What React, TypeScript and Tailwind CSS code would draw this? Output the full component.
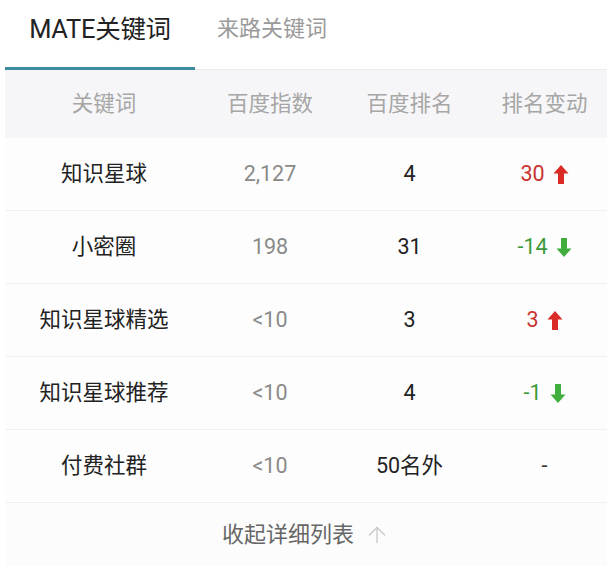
import { ArrowUp } from 'lucide-react';

const rows = [
  { name: '知识星球', index: '2,127', rank: '4', change: '30', dir: 'up' },
  { name: '小密圈', index: '198', rank: '31', change: '-14', dir: 'down' },
  { name: '知识星球精选', index: '<10', rank: '3', change: '3', dir: 'up' },
  { name: '知识星球推荐', index: '<10', rank: '4', change: '-1', dir: 'down' },
  { name: '付费社群', index: '<10', rank: '50名外', change: '-', dir: null },
];

const cols = 'grid grid-cols-[198px_134px_145px_125px]';

export default function App() {
  return (
    <div
      className="w-[607px] h-[566px] bg-white overflow-hidden"
      style={{ fontFamily: 'Roboto, "Noto Sans CJK SC", "Noto Sans", sans-serif' }}
    >
      {/* Tabs */}
      <div className="flex items-end h-[70px] pl-[5px]">
        <div className="relative w-[190px] h-full flex items-center justify-center pb-[11px]">
          <span className="text-[25.5px] text-[#222] tracking-[-0.3px]">MATE关键词</span>
          <div className="absolute bottom-0 left-0 right-0 h-[3px] bg-[#3b8c9c]" />
        </div>
        <div className="flex-1 h-full flex items-center border-b border-[#ebebeb] pl-[22px] pb-[12px]">
          <span className="text-[22px] text-[#9a9a9a]">来路关键词</span>
        </div>
      </div>

      <div className="ml-[5px]">
        {/* Header */}
        <div className={`${cols} h-[68px] items-center bg-[#f6f6f8] text-[21.5px] text-[#a6a6a6]`}>
          <div className="text-center">关键词</div>
          <div className="text-center">百度指数</div>
          <div className="text-center">百度排名</div>
          <div className="text-center">排名变动</div>
        </div>

        {/* Rows */}
        {rows.map((r) => (
          <div
            key={r.name}
            className={`${cols} h-[73px] items-center border-b border-[#f0f0f0] bg-[#fdfdfd] text-[21.5px]`}
          >
            <div className="text-center text-[#222]">{r.name}</div>
            <div className="text-center text-[#8a8a8a]">{r.index}</div>
            <div className="text-center text-[#222]">{r.rank}</div>
            <div className="flex items-center justify-center gap-[8px]">
              {r.dir === 'up' && (
                <>
                  <span className="text-[#c9342f]">{r.change}</span>
                  <svg width="16" height="21" viewBox="0 0 16 21">
                    <path d="M8 1 L15.5 9.5 L11 9.5 L11 20 L5 20 L5 9.5 L0.5 9.5 Z" fill="#da2b26" />
                  </svg>
                </>
              )}
              {r.dir === 'down' && (
                <>
                  <span className="text-[#3c9a3c]">{r.change}</span>
                  <svg width="16" height="21" viewBox="0 0 16 21">
                    <path d="M8 20 L15.5 11.5 L11 11.5 L11 1 L5 1 L5 11.5 L0.5 11.5 Z" fill="#3fae3c" />
                  </svg>
                </>
              )}
              {r.dir === null && <span className="text-[#333]">{r.change}</span>}
            </div>
          </div>
        ))}

        {/* Footer */}
        <div className="h-[63px] flex items-center justify-center gap-[10px] bg-[#fcfcfc]">
          <span className="text-[22px] text-[#666]">收起详细列表</span>
          <ArrowUp className="w-[26px] h-[26px] text-[#c8c8c8]" strokeWidth={1.2} />
        </div>
      </div>
    </div>
  );
}
